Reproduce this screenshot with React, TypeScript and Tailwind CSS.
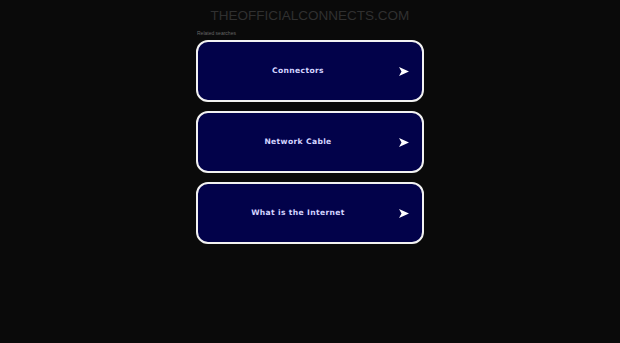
const LINKS = ['Connectors', 'Network Cable', 'What is the Internet'];

export default function App() {
  return (
    <div className="min-h-[343px] w-full bg-[#0a0a0a] flex flex-col items-center" style={{ fontFamily: '"Liberation Sans", Arial, sans-serif' }}>
      {/* Domain header */}
      <div className="pt-[7px] h-[30px] text-[13.5px] leading-[17px] text-[#303030]">
        THEOFFICIALCONNECTS.COM
      </div>

      <div className="w-[228px] flex flex-col">
        <div className="text-[5px] leading-[6px] text-[#666666] pl-[1px] mb-[4px]">Related searches</div>
        <div className="flex flex-col gap-[9px]">
          {LINKS.map(label => (
            <a
              key={label}
              href="#"
              className="flex items-center h-[62px] rounded-[12px] border-2 border-[#f2f2f2] bg-[#02024a] text-[#d4d4ff]"
            >
              <span
                className="w-[200px] text-center text-[7.6px] font-bold tracking-[0.35px]"
                style={{ fontFamily: '"DejaVu Sans", Verdana, sans-serif' }}
              >
                {label}
              </span>
              <svg className="ml-[1px]" width="10" height="9" viewBox="0 0 10 9">
                <path d="M0 0 L10 4.5 L0 9 L2.5 4.5 Z" fill="#ffffff" />
              </svg>
            </a>
          ))}
        </div>
      </div>
    </div>
  );
}
